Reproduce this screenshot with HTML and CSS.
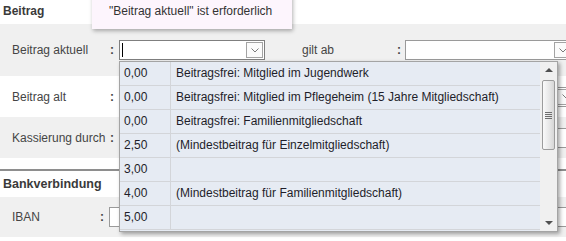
FILE: index.html
```html
<!DOCTYPE html>
<html lang="de">
<head>
<meta charset="utf-8">
<title>Beitrag</title>
<link rel="stylesheet" href="styles.css">
</head>
<body>
<div class="page">
  <section class="group">
    <h2 class="group-title">Beitrag</h2>
    <div class="row row-first shaded">
      <span class="lbl">Beitrag aktuell</span><span class="colon">:</span>
      <div class="combo combo-active"><span class="caret"></span><span class="btn"><svg class="chev" viewBox="0 0 8 5"><path d="M0.5 0.5 L4 4 L7.5 0.5"/></svg></span></div>
      <span class="lbl lbl-right">gilt ab</span><span class="colon colon-right">:</span>
      <div class="combo combo-wide"><span class="btn"><svg class="chev" viewBox="0 0 8 5"><path d="M0.5 0.5 L4 4 L7.5 0.5"/></svg></span></div>
    </div>
    <div class="row">
      <span class="lbl">Beitrag alt</span><span class="colon">:</span>
      <div class="combo"><span class="btn"><svg class="chev" viewBox="0 0 8 5"><path d="M0.5 0.5 L4 4 L7.5 0.5"/></svg></span></div>
      <span class="lbl lbl-right"></span><span class="colon colon-right"></span>
      <div class="combo combo-wide combo-shift"><span class="btn"><svg class="chev" viewBox="0 0 8 5"><path d="M0.5 0.5 L4 4 L7.5 0.5"/></svg></span></div>
    </div>
    <div class="row shaded">
      <span class="lbl">Kassierung durch</span><span class="colon">:</span>
      <div class="combo"><span class="btn"><svg class="chev" viewBox="0 0 8 5"><path d="M0.5 0.5 L4 4 L7.5 0.5"/></svg></span></div>
      <span class="lbl lbl-right"></span><span class="colon colon-right"></span>
      <div class="combo combo-wide combo-shift"></div>
    </div>
  </section>
  <section class="group group-bank">
    <h2 class="group-title group-title-bank">Bankverbindung</h2>
    <div class="row row-iban shaded">
      <span class="lbl lbl-iban">IBAN</span><span class="colon">:</span>
      <div class="textbox"></div>
    </div>
  </section>

  <div class="tooltip">"Beitrag aktuell" ist erforderlich</div>

  <div class="listbox">
    <ul class="options">
      <li class="opt"><span class="val">0,00</span><span class="desc">Beitragsfrei: Mitglied im Jugendwerk</span></li>
      <li class="opt"><span class="val">0,00</span><span class="desc">Beitragsfrei: Mitglied im Pflegeheim (15 Jahre Mitgliedschaft)</span></li>
      <li class="opt"><span class="val">0,00</span><span class="desc">Beitragsfrei: Familienmitgliedschaft</span></li>
      <li class="opt"><span class="val">2,50</span><span class="desc">(Mindestbeitrag für Einzelmitgliedschaft)</span></li>
      <li class="opt"><span class="val">3,00</span><span class="desc"></span></li>
      <li class="opt"><span class="val">4,00</span><span class="desc">(Mindestbeitrag für Familienmitgliedschaft)</span></li>
      <li class="opt"><span class="val">5,00</span><span class="desc"></span></li>
    </ul>
    <div class="scrollbar">
      <span class="arrow arrow-up"></span>
      <div class="thumb"><span class="grip"></span></div>
      <span class="arrow arrow-down"></span>
    </div>
  </div>
</div>
</body>
</html>
```

FILE: styles.css
```css
html, body {
  margin: 0;
  padding: 0;
  background: #ffffff;
  overflow: hidden;
}
body {
  font-family: "Liberation Sans", Arial, sans-serif;
  font-size: 12px;
  color: #454545;
}
.page {
  position: relative;
  width: 566px;
  height: 241px;
  overflow: hidden;
}
.group-title {
  margin: 0;
  height: 24px;
  line-height: 23px;
  padding-left: 3px;
  font-size: 12px;
  font-weight: bold;
  color: #3a3a3a;
}
.group-bank {
  margin-top: 11px;
  border-top: 2px solid #8e8e8e;
}
.group-title-bank {
  height: 26px;
  line-height: 27px;
  font-size: 12.5px;
}
.row {
  display: flex;
  align-items: center;
  height: 41px;
  white-space: nowrap;
}
.row > * {
  flex: none;
}
.row-first {
  height: 52px;
}
.row-iban {
  height: 40px;
}
.shaded {
  background: #f0f0f0;
}
.lbl {
  width: 98px;
  padding-left: 12px;
  line-height: 20px;
}
.lbl-iban {
  width: 88px;
}
.lbl-right {
  width: 95px;
  padding-left: 37px;
}
.colon {
  width: 9px;
  font-weight: bold;
  line-height: 20px;
}
.colon-right {
  width: 8px;
}
.combo {
  box-sizing: border-box;
  width: 146px;
  height: 20px;
  border: 1px solid #7f7f7f;
  background: #ffffff;
  display: flex;
  align-items: center;
  justify-content: flex-end;
  padding-right: 1px;
}
.combo-active {
  justify-content: space-between;
  padding-left: 2px;
}
.combo-wide {
  width: 168px;
  border-color: #9a9a9a;
}
.combo-shift {
  margin-left: 3px;
}
.caret {
  width: 1px;
  height: 14px;
  background: #000000;
}
.btn {
  box-sizing: border-box;
  width: 17px;
  height: 16px;
  border: 1px solid #a3a3a3;
  background: #fbfbfb;
  display: flex;
  align-items: center;
  justify-content: center;
}
.chev {
  width: 8px;
  height: 5px;
  fill: none;
  stroke: #7a7a7a;
  stroke-width: 1;
}
.textbox {
  box-sizing: border-box;
  width: 480px;
  height: 20px;
  border: 1px solid #9a9a9a;
  background: #ffffff;
}

/* tooltip overlay */
.tooltip {
  position: absolute;
  left: 92px;
  top: -6px;
  box-sizing: border-box;
  width: 200px;
  height: 35px;
  padding: 10px 0 0 17px;
  line-height: 15px;
  background: #fdf5fd;
  color: #333333;
  box-shadow: 1px 2px 4px rgba(0, 0, 0, 0.3);
  white-space: nowrap;
}

/* dropdown list overlay */
.listbox {
  position: absolute;
  left: 119px;
  top: 61px;
  box-sizing: border-box;
  width: 439px;
  height: 171px;
  border: 1px solid #a4a4a4;
  background: #e6ebf3;
  box-shadow: 2px 2px 4px rgba(0, 0, 0, 0.35);
  display: flex;
}
.options {
  list-style: none;
  margin: 0;
  padding: 0;
  flex: 1;
  overflow: hidden;
}
.opt {
  display: flex;
  height: 23px;
  line-height: 23px;
  border-bottom: 1px solid #d3d5d9;
  color: #1e1e2a;
  white-space: nowrap;
}
.val {
  box-sizing: border-box;
  width: 51px;
  padding-left: 4px;
  border-right: 1px solid #d3d5d9;
  flex: none;
}
.desc {
  padding-left: 5px;
}
.scrollbar {
  width: 17px;
  flex: none;
  background: #f0f0f0;
  display: flex;
  flex-direction: column;
  align-items: center;
}
.arrow {
  width: 0;
  height: 0;
  border-left: 4px solid transparent;
  border-right: 4px solid transparent;
}
.arrow-up {
  margin-top: 6px;
  border-bottom: 4px solid #505050;
}
.arrow-down {
  margin-top: auto;
  margin-bottom: 6px;
  border-top: 4px solid #505050;
}
.thumb {
  box-sizing: border-box;
  margin-top: 8px;
  width: 13px;
  height: 70px;
  border: 1px solid #9c9c9c;
  border-radius: 2px;
  background: linear-gradient(to right, #fafafa, #e6e6e6 60%, #d6d6d6);
  display: flex;
  align-items: center;
  justify-content: center;
}
.grip {
  width: 7px;
  height: 7px;
  background: repeating-linear-gradient(to bottom, #6e6e6e 0, #6e6e6e 1px, transparent 1px, transparent 2px);
}
```
